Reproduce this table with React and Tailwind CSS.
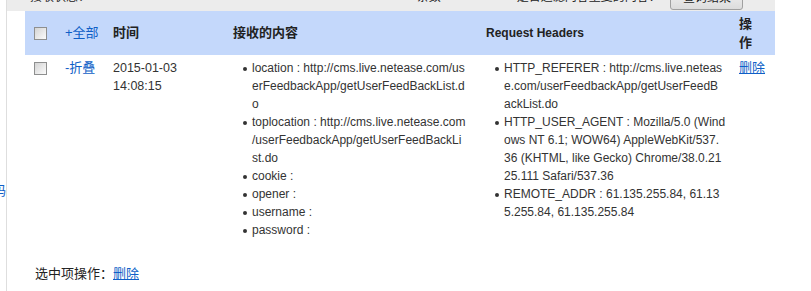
import React from 'react';

const cjk = { fontFamily: '"Liberation Sans", "Noto Sans CJK SC", sans-serif' };

// lines split the way the page wraps them
const contentItems = [
  ['location : http://cms.live.netease.com/us', 'erFeedbackApp/getUserFeedBackList.d', 'o'],
  ['toplocation : http://cms.live.netease.com', '/userFeedbackApp/getUserFeedBackLi', 'st.do'],
  ['cookie :'],
  ['opener :'],
  ['username :'],
  ['password :'],
];

const headerItems = [
  ['HTTP_REFERER : http://cms.live.neteas', 'e.com/userFeedbackApp/getUserFeedB', 'ackList.do'],
  ['HTTP_USER_AGENT : Mozilla/5.0 (Wind', 'ows NT 6.1; WOW64) AppleWebKit/537.', '36 (KHTML, like Gecko) Chrome/38.0.21', '25.111 Safari/537.36'],
  ['REMOTE_ADDR : 61.135.255.84, 61.13', '5.255.84, 61.135.255.84'],
];

function CheckBox() {
  return <div className="w-[13px] h-[13px] border border-[#8e8f8f] bg-gradient-to-br from-[#d4d4d4] to-[#fbfbfb]" />;
}

function Bullets({ items, pad }) {
  return (
    <ul className={pad}>
      {items.map((lines, i) => (
        <li key={i} className="flex">
          <span className="w-[4px] h-[4px] mt-[8px] rounded-full bg-[#333] shrink-0" />
          <span className="ml-[5px] whitespace-nowrap">
            {lines.map((l, j) => <div key={j}>{l}</div>)}
          </span>
        </li>
      ))}
    </ul>
  );
}

export default function App() {
  return (
    <div className="flex w-[811px] h-[291px] bg-white overflow-hidden text-[12px] leading-[18px] text-[#333]" style={cjk}>
      {/* cut-off sidebar */}
      <div className="w-[6px] overflow-hidden flex justify-end pt-[182px]">
        <span className="text-[13px] text-[#0f5fc7] whitespace-nowrap">二维码</span>
      </div>
      <div className="w-px bg-[#dedede]" />

      <div className="w-[768px] flex flex-col">
        {/* top filter bar, scrolled away */}
        <div className="h-[11px] bg-[#ececec] overflow-hidden">
          <div className="flex items-center h-[22px] -mt-[14px] whitespace-nowrap text-[#222]">
            <span className="ml-[23px]">接收状态：</span>
            <span className="ml-[14px] text-[#d00]">*</span>
            <span className="ml-[308px]">条数</span>
            <span className="ml-[76px]">是否过滤内容重复的内容？</span>
            <span className="text-[#e08a00]">*</span>
            <div className="ml-[5px] w-[73px] h-[24px] mt-[2px] border border-[#a0a0a0] rounded-[3px] bg-gradient-to-b from-[#f6f6f6] to-[#dcdcdc] flex items-center justify-center">查询结果</div>
          </div>
        </div>

        <div className="pl-[18px]">
          <div className="w-[750px] grid grid-cols-[32px_48px_120px_253px_253px_44px]">
            {/* header */}
            <div className="h-[44px] bg-[#c4d8fb] flex items-center pl-[9px]"><CheckBox /></div>
            <div className="h-[44px] bg-[#c4d8fb] flex items-center pl-2 text-[13px] text-[#0f5fc7]">+全部</div>
            <div className="h-[44px] bg-[#c4d8fb] flex items-center pl-2 text-[13px] font-bold text-[#222]">时间</div>
            <div className="h-[44px] bg-[#c4d8fb] flex items-center pl-2 text-[13px] font-bold text-[#222]">接收的内容</div>
            <div className="h-[44px] bg-[#c4d8fb] flex items-center pl-2 font-bold text-[#222]">Request Headers</div>
            <div className="h-[44px] bg-[#c4d8fb] flex items-center pl-2 pr-[14px] text-[13px] font-bold text-[#222] leading-[19px]">操作</div>

            {/* row */}
            <div className="pt-[7px] pl-[9px]"><CheckBox /></div>
            <div className="pt-[4px] pl-2 text-[13px] text-[#0f5fc7]">-折叠</div>
            <div className="pt-[4px] pl-2 text-[12.5px]">
              <div>2015-01-03</div>
              <div>14:08:15</div>
            </div>
            <div className="pt-[4px]"><Bullets items={contentItems} pad="pl-[18px]" /></div>
            <div className="pt-[4px]"><Bullets items={headerItems} pad="pl-[17px]" /></div>
            <div className="pt-[4px] pl-2">
              <a href="#" className="text-[13px] text-[#0f5fc7] underline">删除</a>
            </div>
          </div>

          <div className="mt-[26px] pl-[10px] text-[13px] text-[#222]">
            选中项操作：<a href="#" className="text-[#0f5fc7] underline">删除</a>
          </div>
        </div>
      </div>
    </div>
  );
}
